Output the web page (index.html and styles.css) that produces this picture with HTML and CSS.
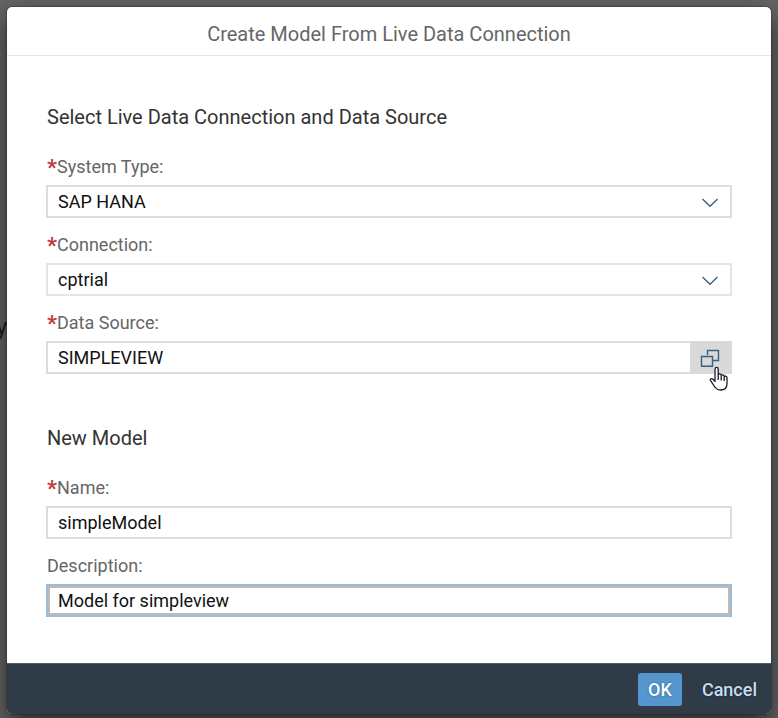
FILE: index.html
```html
<!DOCTYPE html>
<html lang="en">
<head>
<meta charset="utf-8">
<meta name="viewport" content="width=device-width, initial-scale=1">
<title>Create Model From Live Data Connection</title>
<link rel="stylesheet" href="styles.css">
</head>
<body>
<span class="backdrop-text" aria-hidden="true">y</span>
<form class="dialog" role="dialog" aria-labelledby="dialog-title">
  <header class="dialog-header">
    <h1 class="dialog-title" id="dialog-title">Create Model From Live Data Connection</h1>
  </header>
  <main class="dialog-body">
    <section class="section">
      <h2 class="section-title">Select Live Data Connection and Data Source</h2>
      <div class="field">
        <label class="label" for="system"><span class="required">*</span>System Type:</label>
        <div class="control">
          <select class="input" id="system"><option>SAP HANA</option></select>
          <svg class="chevron" viewBox="0 0 18 10" aria-hidden="true"><path d="M1.5 1 9 8.3 16.500 1"/></svg>
        </div>
      </div>
      <div class="field">
        <label class="label" for="connection"><span class="required">*</span>Connection:</label>
        <div class="control">
          <select class="input input-light" id="connection"><option>cptrial</option></select>
          <svg class="chevron" viewBox="0 0 18 10" aria-hidden="true"><path d="M1.5 1 9 8.3 16.500 1"/></svg>
        </div>
      </div>
      <div class="field">
        <label class="label" for="source"><span class="required">*</span>Data Source:</label>
        <div class="control">
          <input class="input" id="source" type="text" value="SIMPLEVIEW">
          <button class="value-help" type="button" aria-label="Select data source">
            <svg class="value-help-icon" viewBox="0 0 20 18" aria-hidden="true"><path d="M7.500 6V1.500H18.500V11.500H13M1.500 7.500H12.500V17.300H1.500Z"/></svg>
          </button>
          <svg class="pointer" viewBox="0 0 20 26" aria-hidden="true"><path d="M6 16V3.200C6 .8 9.200.8 9.200 3.200V10.500 8.800C9.800 7.300 12 7.600 12.200 9V11 9.700C12.800 8.300 15 8.600 15.200 10V12 10.900C15.800 9.600 17.800 10 18 11.800V17.500C18 21.500 15.500 24 11.500 24 8 24 6.400 22.200 4.800 19.500L1.600 14.700C.6 13 2.600 11.800 4 13.200L6 15.500M9.200 9V14M12.200 10V14.500M15.200 11V15"/></svg>
        </div>
      </div>
    </section>
    <section class="section">
      <h2 class="section-title">New Model</h2>
      <div class="field">
        <label class="label" for="name"><span class="required">*</span>Name:</label>
        <input class="input" id="name" type="text" value="simpleModel">
      </div>
      <div class="field">
        <label class="label" for="description">Description:</label>
        <input class="input input-active" id="description" type="text" value="Model for simpleview">
      </div>
    </section>
  </main>
  <footer class="dialog-footer">
    <button class="button button-primary" type="button">OK</button>
    <button class="button" type="button">Cancel</button>
  </footer>
</form>
</body>
</html>
```
FILE: styles.css
```css
* {
  box-sizing: border-box;
}

body {
  margin: 0;
  padding: 7px 7px 5px;
  min-height: 100vh;
  background: #646464;
  font-family: Roboto, "Liberation Sans", sans-serif;
  font-size: 18px;
  line-height: 22px;
  overflow: hidden;
}

.backdrop-text {
  position: absolute;
  left: -4px;
  top: 313px;
  color: #1c1c1c;
  font-size: 24px;
  line-height: 28px;
}

.dialog {
  position: relative;
  background: #fff;
  border-radius: 5px;
  box-shadow: 0 0 1px 1px rgba(0, 0, 0, 0.2), 0 10px 24px rgba(0, 0, 0, 0.6);
}

.dialog-header {
  padding: 15px 16px 9px;
  border-bottom: 1px solid #e5e5e5;
  text-align: center;
}

.dialog-title,
.section-title {
  margin: 0;
  font-size: 20px;
  font-weight: 400;
  line-height: 24px;
}

.dialog-title {
  color: #666;
}

.dialog-body {
  display: flex;
  flex-direction: column;
  gap: 52px;
  padding: 49px 39px 46px;
}

.section {
  display: flex;
  flex-direction: column;
  gap: 16px;
}

.section-title {
  margin-bottom: 11px;
  padding-left: 1px;
  color: #333;
}

.field {
  display: flex;
  flex-direction: column;
  gap: 7px;
}

.label {
  padding-left: 1px;
  color: #666;
}

.required {
  color: #c43c3c;
  font-weight: 700;
  font-size: 22px;
  line-height: 18px;
  vertical-align: -2px;
}

.control {
  position: relative;
  display: flex;
}

.input {
  appearance: none;
  width: 100%;
  min-width: 0;
  height: 33px;
  margin: 0;
  padding: 0 10px;
  border: 2px solid #ddd;
  border-radius: 0;
  outline: 0;
  background: #fff;
  color: #111;
  font: inherit;
}

.input-light {
  border-color: #e5e5e5;
}

.input-active {
  border-color: #9fbad3;
  box-shadow: inset 0 0 0 2px #bbb;
}

.chevron {
  position: absolute;
  right: 13px;
  top: 13px;
  width: 18px;
  height: 10px;
  fill: none;
  stroke: #346187;
  stroke-width: 1.3;
  pointer-events: none;
}

.value-help {
  flex: none;
  display: flex;
  align-items: center;
  justify-content: center;
  width: 41px;
  margin-left: -1px;
  padding: 0 3px 0 0;
  border: 0;
  background: #d9d9d9;
}

.value-help-icon {
  width: 20px;
  height: 18px;
  fill: none;
  stroke: #346187;
  stroke-width: 1.4;
}

.pointer {
  position: absolute;
  right: 3px;
  top: 25px;
  width: 20px;
  height: 26px;
  fill: #fff;
  stroke: #1b1b2b;
  stroke-width: 1.3;
  stroke-linejoin: round;
  pointer-events: none;
}

.dialog-footer {
  display: flex;
  justify-content: flex-end;
  gap: 8px;
  padding: 9px 2px 8px 16px;
  border-top: 1px solid #486074;
  border-radius: 0 0 5px 5px;
  background: #2f3c48;
}

.button {
  height: 33px;
  padding: 0 12px;
  border: 0;
  border-radius: 3px;
  background: transparent;
  color: #c6def3;
  font: inherit;
  font-weight: 500;
  text-shadow: 0 0 2px #17212a;
}

.button-primary {
  padding: 0 10px;
  background: #5496cd;
  color: #fff;
  text-shadow: 0 0 2px #2f5f8a;
}
```
